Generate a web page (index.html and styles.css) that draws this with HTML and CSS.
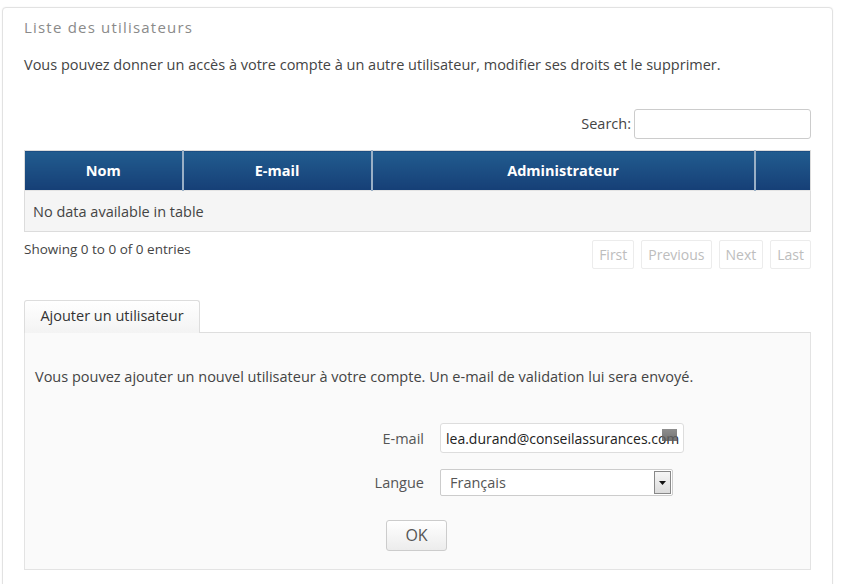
FILE: index.html
```html
<!DOCTYPE html>
<html lang="fr">
<head>
<meta charset="utf-8">
<title>Liste des utilisateurs</title>
<link rel="stylesheet" href="styles.css">
</head>
<body>
<div class="card">
  <h2 class="title">Liste des utilisateurs</h2>
  <p class="intro">Vous pouvez donner un accès à votre compte à un autre utilisateur, modifier ses droits et le supprimer.</p>
  <div class="search-row">
    <label class="search-label">Search:</label>
    <input class="search-input" type="text">
  </div>
  <table class="users">
    <thead>
      <tr>
        <th class="c-nom">Nom</th>
        <th class="c-mail">E-mail</th>
        <th class="c-admin">Administrateur</th>
        <th class="c-act"></th>
      </tr>
    </thead>
    <tbody>
      <tr><td colspan="4" class="empty">No data available in table</td></tr>
    </tbody>
  </table>
  <div class="table-foot">
    <div class="info">Showing 0 to 0 of 0 entries</div>
    <div class="pager">
      <span class="pg">First</span>
      <span class="pg">Previous</span>
      <span class="pg">Next</span>
      <span class="pg">Last</span>
    </div>
  </div>
  <div class="tabs">
    <span class="tab">Ajouter un utilisateur</span>
  </div>
  <div class="panel">
    <p class="panel-text">Vous pouvez ajouter un nouvel utilisateur à votre compte. Un e-mail de validation lui sera envoyé.</p>
    <div class="form">
      <div class="frow">
        <label class="flabel">E-mail</label>
        <div class="email-box">
          <span class="email-val">lea.durand@conseilassurances.com</span>
          <span class="kbd-icon"></span>
        </div>
      </div>
      <div class="frow">
        <label class="flabel">Langue</label>
        <div class="select-box">
          <span class="select-val">Français</span>
          <span class="select-arrow"><svg width="7" height="4" viewBox="0 0 7 4"><path d="M0 0H7L3.5 4Z" fill="#111"/></svg></span>
        </div>
      </div>
      <div class="ok-row">
        <span class="ok-btn">OK</span>
      </div>
    </div>
  </div>
</div>
</body>
</html>
```

FILE: styles.css
```css
* { box-sizing: border-box; }
html, body { margin: 0; padding: 0; background: #fff; }
body {
  font-family: "Open Sans", "Liberation Sans", sans-serif;
  font-size: 14.5px;
  color: #444;
  padding: 7px 0 0 2px;
}
.card {
  width: 831px;
  height: 600px;
  border: 1px solid #e2e2e2;
  border-radius: 4px;
  box-shadow: 0 0 2px rgba(0,0,0,0.06);
  padding: 0 21px 0 21px;
  background: #fff;
}
.title {
  margin: 0;
  padding-top: 9px;
  height: 40px;
  font-size: 15px;
  font-weight: normal;
  color: #8a8a8a;
  letter-spacing: 1.2px;
}
.intro {
  margin: 0;
  padding-top: 7px;
  height: 56px;
  line-height: 19px;
  color: #444;
}
.search-row {
  display: flex;
  justify-content: flex-end;
  align-items: center;
  height: 31px;
  margin-top: 4px;
}
.search-label { margin-right: 3px; color: #444; }
.search-input {
  width: 177px;
  height: 30px;
  border: 1px solid #ccc;
  border-radius: 3px;
  background: #fff;
}
.users {
  margin-top: 11px;
  width: 787px;
  border-collapse: collapse;
  border: 1px solid #dcdcdc;
}
.users th {
  height: 40px;
  background: linear-gradient(#215c8f, #163f76);
  color: #fff;
  font-weight: bold;
  font-size: 14.5px;
  border-left: 2px solid #9ab0c6;
  padding: 0;
}
.users th:first-child { border-left: 0; }
.c-nom { width: 158px; }
.c-mail { width: 189px; }
.c-admin { width: 383px; }
.users td.empty {
  height: 41px;
  background: #f5f5f5;
  padding: 0 8px;
  color: #444;
  border-top: 1px solid #e4e4e4;
}
.table-foot {
  display: flex;
  justify-content: space-between;
  align-items: flex-start;
  margin-top: 8px;
  height: 60px;
}
.info { font-size: 13.5px; color: #444; line-height: 18px; }
.pager { display: flex; gap: 7px; padding-top: 0; }
.pg {
  display: inline-block;
  height: 29px;
  line-height: 27px;
  padding: 0 6px;
  border: 1px solid #ececec;
  border-radius: 2px;
  color: #bdbdbd;
  font-size: 14px;
  background: #fff;
}
.tabs { display: flex; height: 33px; }
.tab {
  display: inline-block;
  width: 176px;
  height: 33px;
  line-height: 30px;
  text-align: center;
  border: 1px solid #ddd;
  border-bottom: 0;
  border-radius: 3px 3px 0 0;
  background: linear-gradient(#fff, #f3f3f3);
  color: #333;
  font-size: 14.5px;
}
.panel {
  width: 787px;
  height: 238px;
  border: 1px solid #e3e3e3;
  border-top: 1px solid #dedede;
  margin-top: -1px;
  background: #fafafa;
  padding: 0 10px;
}
.panel-text {
  margin: 0;
  padding-top: 35px;
  line-height: 18px;
  color: #444;
}
.form { margin-top: 37px; }
.frow { display: flex; align-items: center; margin-bottom: 16px; }
.flabel {
  width: 405px;
  text-align: right;
  padding-right: 16px;
  color: #555;
}
.email-box {
  position: relative;
  width: 244px;
  height: 30px;
  border: 1px solid #ddd;
  border-radius: 3px;
  background: #fff;
  display: flex;
  align-items: center;
  padding-left: 5px;
}
.email-val { color: #222; font-size: 14px; white-space: nowrap; }
.kbd-icon {
  position: absolute;
  right: 6px;
  top: 5px;
  width: 15px;
  height: 12px;
  background: linear-gradient(#7a7a7a, #5a5a5a);
  opacity: 0.85;
}
.select-box {
  width: 233px;
  height: 27px;
  border: 1px solid #ccc;
  border-radius: 2px;
  background: #fff;
  display: flex;
  align-items: center;
  justify-content: space-between;
  padding-left: 9px;
}
.select-val { color: #555; font-size: 14.5px; }
.select-arrow {
  width: 17px;
  height: 23px;
  margin-right: 1px;
  border: 1px solid #888;
  background: linear-gradient(#f6f6f6, #dcdcdc);
  display: flex;
  align-items: center;
  justify-content: center;
}
.ok-row { padding-left: 351px; padding-top: 8px; }
.ok-btn {
  display: inline-block;
  width: 61px;
  height: 31px;
  line-height: 29px;
  text-align: center;
  border: 1px solid #ccc;
  border-radius: 3px;
  background: linear-gradient(#fff, #ececec);
  color: #555;
  font-size: 16px;
}
```
